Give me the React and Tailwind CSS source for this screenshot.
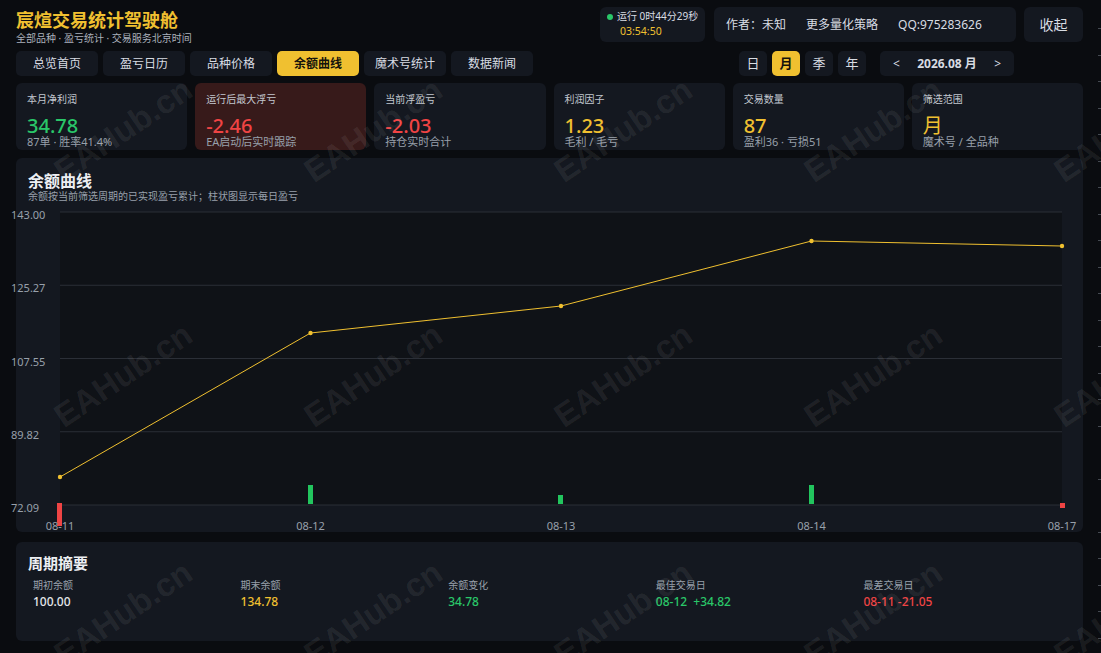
import React from 'react';

const tabs = ['总览首页', '盈亏日历', '品种价格', '余额曲线', '魔术号统计', '数据新闻'];
const periods = ['日', '月', '季', '年'];

const stats = [
  { label: '本月净利润', value: '34.78', sub: '87单 · 胜率41.4%', color: 'text-[#2ac769]' },
  { label: '运行后最大浮亏', value: '-2.46', sub: 'EA启动后实时跟踪', color: 'text-[#ef4444]', danger: true },
  { label: '当前浮盈亏', value: '-2.03', sub: '持仓实时合计', color: 'text-[#ef4444]' },
  { label: '利润因子', value: '1.23', sub: '毛利 / 毛亏', color: 'text-[#f0c030]' },
  { label: '交易数量', value: '87', sub: '盈利36 · 亏损51', color: 'text-[#f0c030]' },
  { label: '筛选范围', value: '月', sub: '魔术号 / 全品种', color: 'text-[#f0c030] font-normal' },
];

const summary = [
  { label: '期初余额', value: '100.00', color: 'text-[#e5e7eb]' },
  { label: '期末余额', value: '134.78', color: 'text-[#f0c030]' },
  { label: '余额变化', value: '34.78', color: 'text-[#2ac769]' },
  { label: '最佳交易日', value: '08-12  +34.82', color: 'text-[#2ac769]' },
  { label: '最差交易日', value: '08-11 -21.05', color: 'text-[#ef4444]' },
];

// chart geometry, svg-local coords (svg sits at card x=16, page y=203)
const xs = [44, 294.5, 545, 795.5, 1046];
const days = ['08-11', '08-12', '08-13', '08-14', '08-17'];
const line = [275, 131, 104, 39, 44];
const grid = [
  { y: 10, v: '143.00' },
  { y: 83.25, v: '125.27' },
  { y: 156.5, v: '107.55' },
  { y: 229.75, v: '89.82' },
  { y: 303, v: '72.09' },
];
const bars = [
  { x: 41, y: 301, h: 23, c: '#ef4444' },
  { x: 292, y: 283, h: 19, c: '#22c55e' },
  { x: 542, y: 293, h: 9, c: '#22c55e' },
  { x: 793, y: 283, h: 19, c: '#22c55e' },
  { x: 1044, y: 301, h: 5, c: '#ef4444' },
];

const BalanceChart = () => (
  <svg width="1067" height="329" className="block overflow-visible">
    <rect x="44" y="10" width="1002" height="293" fill="#0f1217" />
    {grid.map((g) => (
      <g key={g.v}>
        <line x1="44" x2="1046" y1={g.y} y2={g.y} stroke="#2b2f37" strokeWidth="1" />
        <text x="-5" y={g.y + 7} fill="#98a0ab" fontSize="11">
          {g.v}
        </text>
      </g>
    ))}
    {bars.map((b, i) => (
      <rect key={i} x={b.x} y={b.y} width="5" height={b.h} fill={b.c} />
    ))}
    <polyline
      points={xs.map((x, i) => `${x},${line[i]}`).join(' ')}
      fill="none"
      stroke="#f0c030"
      strokeWidth="1"
    />
    {xs.map((x, i) => (
      <circle key={i} cx={x} cy={line[i]} r="2.2" fill="#f0c030" />
    ))}
    {days.map((d, i) => (
      <text key={d} x={xs[i]} y="328" textAnchor="middle" fill="#98a0ab" fontSize="11">
        {d}
      </text>
    ))}
  </svg>
);

const Watermarks = () => {
  const marks = [];
  [130, 375, 613].forEach((y) => {
    [123, 373, 623, 873, 1123].forEach((x) => marks.push({ x, y }));
  });
  return (
    <div className="pointer-events-none absolute inset-0 overflow-hidden">
      {marks.map((m, i) => (
        <span
          key={i}
          className="absolute -translate-x-1/2 -translate-y-1/2 -rotate-[34deg] whitespace-nowrap font-['Liberation_Sans',sans-serif] text-[33px] font-bold text-white/[0.08]"
          style={{ left: m.x, top: m.y }}
        >
          EAHub.cn
        </span>
      ))}
    </div>
  );
};

export default function App() {
  return (
    <div className="relative min-h-screen overflow-hidden bg-[#0a0c10] pt-[7px] pl-4 pr-[18px] font-['Noto_Sans','Noto_Sans_CJK_SC',sans-serif] text-[#d8dce3]">
      {/* header */}
      <div className="flex h-[35px] items-start">
        <div className="mt-[3px]">
          <div className="text-[18px] leading-[20px] font-bold text-[#f0c030]">宸煊交易统计驾驶舱</div>
          <div className="mt-[2px] text-[10px] leading-[12px] text-[#aab1bc]">全部品种 · 盈亏统计 · 交易服务北京时间</div>
        </div>
        <div className="ml-auto flex h-[35px] gap-2">
          <div className="w-[105px] rounded-[6px] bg-[#141820] pl-[7px] pt-[2px]">
            <div className="flex items-center gap-[4px] whitespace-nowrap text-[10px] leading-[15px] text-[#d8dce3]">
              <span className="h-[6px] w-[6px] shrink-0 rounded-full bg-[#2ac769]" />
              运行 0时44分29秒
            </div>
            <div className="pl-[13px] text-[10.5px] leading-[15px] text-[#f0c030]">03:54:50</div>
          </div>
          <div className="ml-[1px] flex w-[302px] items-center gap-5 rounded-[6px] bg-[#141820] pl-[12px] text-[12px] text-[#d8dce3]">
            <span>作者：未知</span>
            <span>更多量化策略</span>
            <span>QQ:975283626</span>
          </div>
          <button className="flex w-[59px] items-center justify-center rounded-[6px] bg-[#141820] text-[14px] text-[#d8dce3]">
            收起
          </button>
        </div>
      </div>

      {/* tabs + period */}
      <div className="mt-[9px] flex h-[25px] items-stretch">
        <div className="flex gap-[5px]">
          {tabs.map((t) => (
            <div
              key={t}
              className={
                t === '余额曲线'
                  ? 'flex w-[82px] items-center justify-center rounded-[5px] bg-[#f0c030] text-[12px] font-bold text-[#15130c]'
                  : 'flex w-[82px] items-center justify-center rounded-[5px] bg-[#141820] text-[12px] text-[#d8dce3]'
              }
            >
              {t}
            </div>
          ))}
        </div>
        <div className="ml-auto mr-[69px] flex gap-[5px]">
          {periods.map((p) => (
            <div
              key={p}
              className={
                p === '月'
                  ? 'flex w-[28px] items-center justify-center rounded-[5px] bg-[#f0c030] text-[13px] font-bold text-[#15130c]'
                  : 'flex w-[28px] items-center justify-center rounded-[5px] bg-[#141820] text-[13px] text-[#d8dce3]'
              }
            >
              {p}
            </div>
          ))}
          <div className="ml-[9px] flex w-[134px] items-center justify-between rounded-[5px] bg-[#141820] px-[13px] text-[12px] text-[#d8dce3]">
            <span>&lt;</span>
            <span className="font-bold">2026.08 月</span>
            <span>&gt;</span>
          </div>
        </div>
      </div>

      {/* stat cards */}
      <div className="mt-[7px] grid h-[67px] grid-cols-6 gap-2">
        {stats.map((s) => (
          <div
            key={s.label}
            className={`rounded-[6px] pl-[11px] pt-[10px] ${s.danger ? 'bg-[#371a1a]' : 'bg-[#141820]'}`}
          >
            <div className="text-[10px] leading-[12px] text-[#c3c8d0]">{s.label}</div>
            <div className={`mt-[11px] text-[20px] leading-[20px] font-medium ${s.color}`}>{s.value}</div>
            <div className="mt-[-1px] text-[11px] leading-[13px] text-[#98a0ab]">{s.sub}</div>
          </div>
        ))}
      </div>

      {/* balance chart */}
      <div className="mt-2 h-[374px] rounded-[6px] bg-[#141820]">
        <div className="px-3 pt-[14px]">
          <div className="text-[16px] leading-[18px] font-bold text-[#eceef2]">余额曲线</div>
          <div className="text-[10px] leading-[12px] text-[#98a0ab]">余额按当前筛选周期的已实现盈亏累计；柱状图显示每日盈亏</div>
        </div>
        <BalanceChart />
      </div>

      {/* period summary */}
      <div className="mt-[10px] h-[99px] rounded-[6px] bg-[#141820] px-3 pt-[12px]">
        <div className="text-[15px] leading-[18px] font-bold text-[#eceef2]">周期摘要</div>
        <div className="mt-[7px] grid grid-cols-5 pl-[5px]">
          {summary.map((s) => (
            <div key={s.label}>
              <div className="text-[10px] leading-[12px] text-[#98a0ab]">{s.label}</div>
              <div className={`mt-[4px] whitespace-pre text-[12px] leading-[14px] font-medium ${s.color}`}>{s.value}</div>
            </div>
          ))}
        </div>
      </div>

      <Watermarks />
      <div className="pointer-events-none absolute right-0 top-[3px] h-full w-[3px] bg-[repeating-linear-gradient(to_bottom,transparent_0px,transparent_25.5px,#454a52_25.5px,#454a52_26.5px)]" />
    </div>
  );
}
